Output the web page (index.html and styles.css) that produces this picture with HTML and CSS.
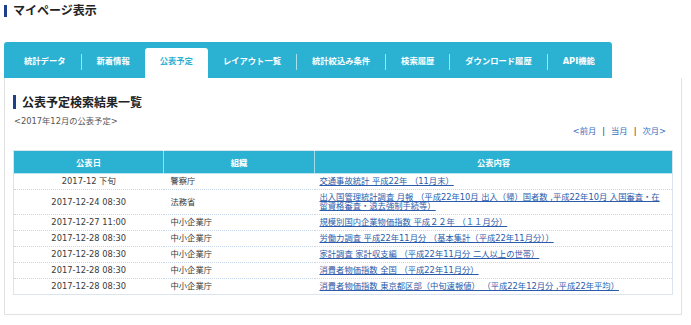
FILE: index.html
```html
<!DOCTYPE html>
<html lang="ja">
<head>
    <meta charset="UTF-8">
    <title>マイページ表示</title>
    <link rel="stylesheet" href="styles.css">
</head>
<body>
    <h1 class="page-title">マイページ表示</h1>

    <div class="tabs">
        <a class="tab">統計データ</a>
        <span class="sep"></span>
        <a class="tab">新着情報</a>
        <a class="tab active">公表予定</a>
        <a class="tab">レイアウト一覧</a>
        <span class="sep"></span>
        <a class="tab">統計絞込み条件</a>
        <span class="sep"></span>
        <a class="tab">検索履歴</a>
        <span class="sep"></span>
        <a class="tab">ダウンロード履歴</a>
        <span class="sep"></span>
        <a class="tab">API機能</a>
    </div>

    <div class="panel">
        <h2 class="section-title">公表予定検索結果一覧</h2>
        <div class="month">&lt;2017年12月の公表予定&gt;</div>
        <div class="month-nav">
            <a href="#">&lt;前月</a><span class="bar">|</span><a href="#">当月</a><span class="bar">|</span><a href="#">次月&gt;</a>
        </div>

        <table class="schedule">
            <colgroup>
                <col class="c-date">
                <col class="c-org">
                <col class="c-title">
            </colgroup>
            <thead>
                <tr>
                    <th>公表日</th>
                    <th>組織</th>
                    <th>公表内容</th>
                </tr>
            </thead>
            <tbody>
                <tr>
                    <td class="date">2017-12 下旬</td>
                    <td class="org">警察庁</td>
                    <td class="title"><a href="#">交通事故統計 平成22年 （11月末）</a></td>
                </tr>
                <tr>
                    <td class="date">2017-12-24 08:30</td>
                    <td class="org">法務省</td>
                    <td class="title"><a href="#">出入国管理統計調査 月報 （平成22年10月 出入（帰）国者数 ,平成22年10月 入国審査・在留資格審査・退去強制手続等）</a></td>
                </tr>
                <tr>
                    <td class="date">2017-12-27 11:00</td>
                    <td class="org">中小企業庁</td>
                    <td class="title"><a href="#">規模別国内企業物価指数 平成２２年 （１１月分）</a></td>
                </tr>
                <tr>
                    <td class="date">2017-12-28 08:30</td>
                    <td class="org">中小企業庁</td>
                    <td class="title"><a href="#">労働力調査 平成22年11月分 （基本集計（平成22年11月分））</a></td>
                </tr>
                <tr>
                    <td class="date">2017-12-28 08:30</td>
                    <td class="org">中小企業庁</td>
                    <td class="title"><a href="#">家計調査 家計収支編 （平成22年11月分 二人以上の世帯）</a></td>
                </tr>
                <tr>
                    <td class="date">2017-12-28 08:30</td>
                    <td class="org">中小企業庁</td>
                    <td class="title"><a href="#">消費者物価指数 全国 （平成22年11月分）</a></td>
                </tr>
                <tr>
                    <td class="date">2017-12-28 08:30</td>
                    <td class="org">中小企業庁</td>
                    <td class="title"><a href="#">消費者物価指数 東京都区部（中旬速報値） （平成22年12月分 ,平成22年平均）</a></td>
                </tr>
            </tbody>
        </table>
    </div>
</body>
</html>
```

FILE: styles.css
```css
body {
    margin: 0;
    font-family: "DejaVu Sans", "Noto Sans CJK JP", sans-serif;
    color: #333;
    background-color: #fff;
}

.page-title {
    margin: 5px 0 0 4px;
    padding-left: 6px;
    border-left: 3px solid #1d3f8c;
    font-size: 12px;
    line-height: 12px;
    font-weight: bold;
    color: #222;
}

.tabs {
    display: flex;
    align-items: center;
    width: 603px;
    height: 36px;
    margin: 25px 0 0 4px;
    padding-left: 5px;
    background-color: #2bb2d3;
    border-radius: 3px 3px 0 0;
}

.tab {
    align-self: flex-end;
    height: 30px;
    line-height: 26px;
    padding: 0 15px;
    font-size: 8.3px;
    font-weight: bold;
    color: #fff;
    white-space: nowrap;
}

.tab.active {
    background-color: #fff;
    color: #2bb2d3;
    border-radius: 3px 3px 0 0;
}

.sep {
    width: 1px;
    height: 16px;
    margin-top: 3px;
    background-color: rgba(255, 255, 255, 0.6);
}

.panel {
    width: 659px;
    margin-left: 4px;
    padding: 0 9px 19px 8px;
    border: 1px solid #e2e2e2;
    border-top: none;
    background-color: #fff;
}

.section-title {
    margin: 0;
    padding-top: 15px;
    font-size: 12px;
    font-weight: bold;
    color: #222;
}

.section-title::before {
    content: "";
    display: inline-block;
    width: 3px;
    height: 14px;
    margin-right: 6px;
    vertical-align: -2px;
    background-color: #1d3f8c;
}

.month {
    margin-top: 6px;
    padding-left: 1px;
    font-size: 8.3px;
    line-height: 10px;
    color: #555;
}

.month-nav {
    text-align: right;
    padding-right: 6px;
    font-size: 8.3px;
    line-height: 10px;
}

.month-nav a {
    color: #3a6fc0;
    text-decoration: none;
}

.month-nav .bar {
    margin: 0 6px;
    color: #333;
}

.schedule {
    width: 659px;
    margin-top: 14px;
    border-collapse: collapse;
    border: 1px solid #dbe5ef;
    font-size: 8.3px;
    table-layout: fixed;
}

.c-date { width: 150px; }
.c-org { width: 151px; }
.c-title { width: 358px; }

.schedule th {
    height: 22px;
    padding: 0;
    background-color: #2bb2d3;
    color: #fff;
    font-weight: bold;
    border-left: 1px solid rgba(255, 255, 255, 0.55);
    border-bottom: 1px solid #bfe5f1;
}

.schedule th:first-child {
    border-left: none;
}

.schedule td {
    padding: 3px 0;
    line-height: 9px;
    color: #3a3a3a;
    border-bottom: 1px dotted #c6d8ea;
    vertical-align: middle;
}

.schedule tr:last-child td {
    border-bottom: 1px solid #dbe5ef;
}

.schedule td.date {
    text-align: center;
}

.schedule td.org {
    padding-left: 7px;
}

.schedule td.title {
    padding-left: 5px;
    padding-right: 8px;
}

.schedule td.title a {
    color: #2a5cab;
    text-decoration: underline;
}
```
